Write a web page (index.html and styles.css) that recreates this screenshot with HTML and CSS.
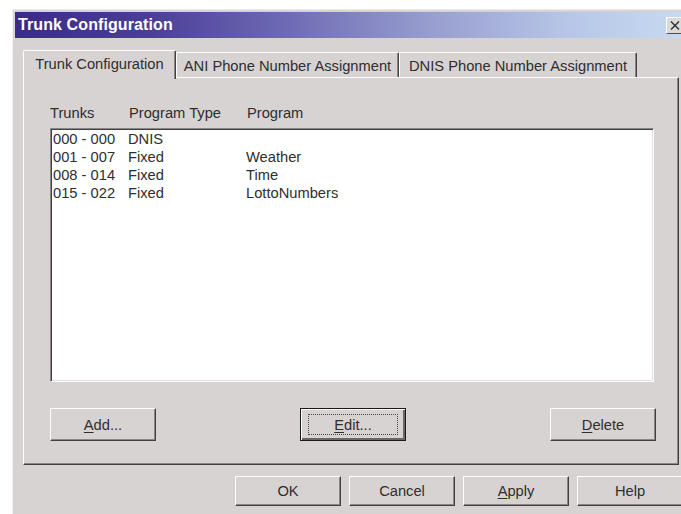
FILE: index.html
```html
<!DOCTYPE html>
<html lang="en">
<head>
<meta charset="utf-8">
<title>Trunk Configuration</title>
<link rel="stylesheet" href="styles.css">
</head>
<body>
<div class="window">
  <div class="titlebar">
    <span class="title">Trunk Configuration</span>
    <span class="close">
      <svg width="10" height="9" viewBox="0 0 10 9"><path d="M1 0.5 L9 8.5 M9 0.5 L1 8.5" stroke="#303030" stroke-width="1.4" fill="none"/></svg>
    </span>
  </div>
  <div class="content">
    <div class="tabs">
      <div class="tab tab-active">Trunk Configuration</div>
      <div class="tab tab-ani">ANI Phone Number Assignment</div>
      <div class="tab tab-dnis">DNIS Phone Number Assignment</div>
    </div>
    <div class="panel">
      <div class="cols head">
        <span class="c1">Trunks</span>
        <span class="c2">Program Type</span>
        <span class="c3">Program</span>
      </div>
      <div class="list">
        <div class="cols row"><span class="c1">000 - 000</span><span class="c2">DNIS</span><span class="c3"></span></div>
        <div class="cols row"><span class="c1">001 - 007</span><span class="c2">Fixed</span><span class="c3">Weather</span></div>
        <div class="cols row"><span class="c1">008 - 014</span><span class="c2">Fixed</span><span class="c3">Time</span></div>
        <div class="cols row"><span class="c1">015 - 022</span><span class="c2">Fixed</span><span class="c3">LottoNumbers</span></div>
      </div>
      <div class="actions">
        <button class="btn btn-tall"><u>A</u>dd...</button>
        <button class="btn btn-tall btn-default"><span class="focus"><u>E</u>dit...</span></button>
        <button class="btn btn-tall"><u>D</u>elete</button>
      </div>
    </div>
    <div class="footer">
      <button class="btn">OK</button>
      <button class="btn">Cancel</button>
      <button class="btn"><u>A</u>pply</button>
      <button class="btn">Help</button>
    </div>
  </div>
</div>
</body>
</html>
```
FILE: styles.css
```css
html, body {
  margin: 0;
  padding: 0;
  background: #ffffff;
  overflow: hidden;
}

body {
  width: 681px;
  height: 514px;
  font-family: "Liberation Sans", Arial, sans-serif;
  font-size: 14.7px;
  color: #2e2e2e;
}

/* dialog frame */
.window {
  margin: 9px 0 0 12px;
  padding: 2px 0 0 2px;
  width: 690px;
  height: 520px;
  background: #d7d3d3;
  border-top: 1px solid #ecebeb;
  border-left: 1px solid #f2f1f1;
}

.titlebar {
  height: 26px;
  display: flex;
  align-items: center;
  padding-left: 3px;
  background: linear-gradient(to right, #3a2b87 0%, #4b3f98 20%, #6f6cb5 40%, #979dcf 60%, #b7c6e7 80%, #c9ddf3 100%);
}

.title {
  color: #ffffff;
  font-weight: bold;
  font-size: 16px;
  letter-spacing: 0.1px;
}

.close {
  margin-left: auto;
  margin-right: 21px;
  width: 18px;
  height: 17px;
  box-sizing: border-box;
  background: #dcd9d9;
  border-top: 1px solid #ffffff;
  border-left: 1px solid #ffffff;
  border-right: 1px solid #505050;
  border-bottom: 1px solid #505050;
  display: flex;
  align-items: center;
  justify-content: center;
}

.content {
  padding: 12px 0 0 8px;
}

/* property sheet tabs */
.tabs {
  display: flex;
  align-items: flex-end;
  height: 27px;
}

.tab {
  box-sizing: border-box;
  height: 25px;
  display: flex;
  align-items: center;
  justify-content: center;
  background: #d7d3d3;
  border-top: 1px solid #ffffff;
  border-left: 1px solid #ffffff;
  border-right: 1px solid #404040;
  box-shadow: inset -1px 0 #8a8686;
  border-radius: 2px 2px 0 0;
  padding-top: 1px;
  white-space: nowrap;
}

.tab-active {
  width: 153px;
  height: 29px;
  margin-bottom: -2px;
  padding-bottom: 3px;
  position: relative;
  z-index: 1;
}

.tab-ani {
  width: 223px;
}

.tab-dnis {
  width: 238px;
}

.panel {
  box-sizing: border-box;
  width: 656px;
  height: 388px;
  padding: 26px 22px 0 26px;
  border-top: 1px solid #ffffff;
  border-left: 1px solid #ffffff;
  border-right: 1px solid #404040;
  border-bottom: 1px solid #404040;
  box-shadow: inset -1px -1px #8a8686;
}

.cols {
  display: flex;
  height: 18px;
  line-height: 18px;
  white-space: nowrap;
}

.head .c1 { width: 79px; }
.row .c1 { width: 75px; }
.c2 { width: 118px; }

/* list box */
.list {
  box-sizing: border-box;
  margin-top: 6px;
  width: 604px;
  height: 254px;
  padding: 1px 0 0 2px;
  background: #ffffff;
  border-top: 1px solid #8a8686;
  border-left: 1px solid #8a8686;
  border-right: 1px solid #ffffff;
  border-bottom: 1px solid #ffffff;
  box-shadow: inset 1px 1px #404040, inset -1px -1px #e4e1e1;
}

.actions {
  margin-top: 26px;
  display: flex;
  justify-content: space-between;
}

.footer {
  margin: 11px 0 0 212px;
  display: flex;
  gap: 8px;
}

/* push buttons */
.btn {
  box-sizing: border-box;
  width: 106px;
  height: 30px;
  padding: 0;
  margin: 0;
  font: inherit;
  color: #2e2e2e;
  background: #d7d3d3;
  border-top: 1px solid #ffffff;
  border-left: 1px solid #ffffff;
  border-right: 1px solid #404040;
  border-bottom: 1px solid #404040;
  box-shadow: inset -1px -1px #8a8686;
  display: flex;
  align-items: center;
  justify-content: center;
}

.btn-tall {
  height: 33px;
}

.btn-default {
  border: 1px solid #1a1a1a;
  box-shadow: inset 1px 1px #ffffff, inset -2px -2px #6a6666;
}

.focus {
  box-sizing: border-box;
  width: calc(100% - 14px);
  height: calc(100% - 10px);
  border: 1px dotted #4a4646;
  display: flex;
  align-items: center;
  justify-content: center;
}

u {
  text-decoration: underline;
  text-underline-offset: 2px;
}
```
